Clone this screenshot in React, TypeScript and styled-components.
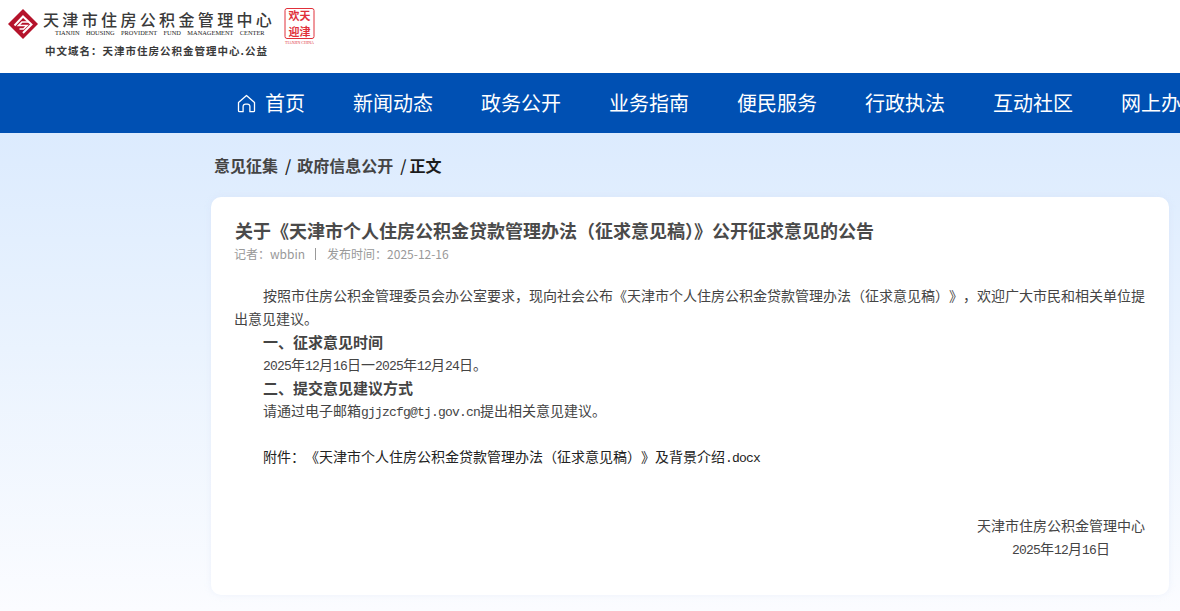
import React from "react";
import styled, { createGlobalStyle } from "styled-components";

const NAV_ITEMS = ["新闻动态", "政务公开", "业务指南", "便民服务", "行政执法", "互动社区", "网上办事"];

const GlobalStyle = createGlobalStyle`
  html, body {
    margin: 0;
    padding: 0;
    height: 100%;
    overflow: hidden;
    background: #fff;
    font-family: "Noto Sans CJK SC", "Noto Sans", sans-serif;
  }
`;

const Page = styled.div`
  width: 1180px;
  height: 611px;
  overflow: hidden;
`;

const Header = styled.header`
  height: 73px;
  background: #fff;
  display: flex;
  align-items: flex-start;
  padding: 8px 0 0 8px;
  box-sizing: border-box;
`;

const Emblem = styled.svg`
  width: 30px;
  height: 30px;
  margin-top: 1px;
  flex: none;
`;

const Brand = styled.div`
  margin-left: 5px;
  width: 233px;
`;

const BrandName = styled.div`
  font-size: 16px;
  line-height: 19px;
  margin-top: 2px;
  font-weight: 500;
  letter-spacing: 3.35px;
  color: #3a3a3a;
  white-space: nowrap;
`;

const BrandEn = styled.div`
  font-family: "Liberation Serif", serif;
  font-size: 6.4px;
  line-height: 8px;
  color: #222;
  margin-left: 12px;
  word-spacing: 4.8px;
  white-space: nowrap;
`;

const Domain = styled.div`
  font-size: 10.5px;
  line-height: 14px;
  font-weight: 700;
  letter-spacing: 1px;
  color: #3a3a3a;
  margin: 7px 0 0 2px;
  white-space: nowrap;
  text-spacing-trim: space-all;
`;

const Seal = styled.svg`
  width: 32px;
  height: 36px;
  margin-left: 8px;
  flex: none;
`;

const Nav = styled.nav`
  height: 60px;
  background: #0050b3;
  display: flex;
  align-items: center;
  gap: 48px;
  padding-left: 237px;
  overflow: hidden;
  white-space: nowrap;
`;

const NavItem = styled.a`
  color: #fff;
  font-size: 20px;
  line-height: 60px;
  flex: none;
  display: flex;
  align-items: center;
  gap: 9px;
`;

const Main = styled.main`
  height: 478px;
  background: linear-gradient(180deg, #dcebfe 0%, #eaf3fe 45%, #fbfcff 100%);
  padding: 0 11px 0 211px;
  box-sizing: border-box;
`;

const Crumbs = styled.div`
  display: flex;
  align-items: center;
  height: 64px;
  padding-left: 3px;
  font-size: 16px;
  font-weight: 700;
  color: #444;
`;

const CrumbSep = styled.span<{ $tight?: boolean }>`
  margin: 0 ${(p) => (p.$tight ? "3px" : "6px")} 0 7px;
  font-weight: 500;
  color: #222;
`;

const CrumbCurrent = styled.span`
  color: #1c1c1c;
`;

const Card = styled.article`
  height: 398px;
  background: #fff;
  border-radius: 10px;
  padding: 19px 24px 0;
  box-sizing: border-box;
  box-shadow: 0 0 6px rgba(200, 215, 240, 0.25);
`;

const Title = styled.h1`
  margin: 0;
  font-size: 18px;
  line-height: 28px;
  font-weight: 700;
  color: #4a4a4a;
`;

const Meta = styled.div`
  display: flex;
  align-items: center;
  font-size: 12px;
  line-height: 18px;
  color: #999;
  margin: 1px 0 21px -1px;
`;

const MetaDivider = styled.span`
  width: 1px;
  height: 12px;
  background: #999;
  margin: 0 11px 0 10px;
`;

const Body = styled.div`
  font-size: 14px;
  line-height: 23px;
  color: #444;
  margin-left: -1px;
  text-spacing-trim: space-all;
  font-kerning: none;
`;

const Para = styled.p<{ $dark?: boolean }>`
  margin: 0;
  text-indent: 29px;
  color: ${(p) => (p.$dark ? "#222" : "#444")};
  min-height: 23px;
`;

const Heading = styled(Para)`
  font-size: 15px;
  font-weight: 700;
`;

const Latin = styled.span`
  font-family: "Liberation Mono", monospace;
  font-size: 13px;
  letter-spacing: -0.8px;
  line-height: 1;
`;

const Signature = styled.div`
  margin-top: 46px;
  margin-left: auto;
  width: 168px;
  text-align: center;
  color: #444;
`;

const HomeIcon = () => (
  <svg width="19" height="19" viewBox="0 0 19 19" fill="none" stroke="#fff" strokeWidth="1.3" strokeLinejoin="round">
    <path d="M1.5 8.5 9.5 1.5l8 7v8.2a1 1 0 0 1-1 1h-3.6v-5.2a2.4 2.4 0 0 0-2.4-2.4h-2a2.4 2.4 0 0 0-2.4 2.4v5.2H2.5a1 1 0 0 1-1-1z" />
  </svg>
);

export default function App() {
  return (
    <Page>
      <GlobalStyle />
      <Header>
        <Emblem viewBox="0 0 30 30">
          <path d="M15 0 30 15 15 30 0 15z" fill="#b5132b" />
          <path d="M6.500 16.500 15 7.500 23.500 15.500 15 24" fill="none" stroke="#fff" strokeWidth="2" />
          <path d="M20.500 13 14 13 10.500 16.500 19 16.500 15.500 20 11.500 20" fill="none" stroke="#fff" strokeWidth="1.6" />
        </Emblem>
        <Brand>
          <BrandName>天津市住房公积金管理中心</BrandName>
          <BrandEn>TIANJIN HOUSING PROVIDENT FUND MANAGEMENT CENTER</BrandEn>
          <Domain>中文域名：天津市住房公积金管理中心.公益</Domain>
        </Brand>
        <Seal viewBox="0 0 32 36">
          <rect x="1" y="0.5" width="29" height="30" rx="2" fill="#fff" stroke="#e0303a" strokeWidth="1" />
          <text x="15.500" y="12" fontSize="11" fontWeight="700" fill="#e0303a" textAnchor="middle" fontFamily="Noto Sans CJK SC">欢天</text>
          <text x="15.500" y="28" fontSize="11" fontWeight="700" fill="#e0303a" textAnchor="middle" fontFamily="Noto Sans CJK SC">迎津</text>
          <text x="15.500" y="35.500" fontSize="4" fill="#e0303a" textAnchor="middle" fontFamily="Liberation Serif">TIANJIN CHINA</text>
        </Seal>
      </Header>
      <Nav>
        <NavItem>
          <HomeIcon />
          首页
        </NavItem>
        {NAV_ITEMS.map((item) => (
          <NavItem key={item}>{item}</NavItem>
        ))}
      </Nav>
      <Main>
        <Crumbs>
          意见征集
          <CrumbSep>/</CrumbSep>
          政府信息公开
          <CrumbSep $tight>/</CrumbSep>
          <CrumbCurrent>正文</CrumbCurrent>
        </Crumbs>
        <Card>
          <Title>关于《天津市个人住房公积金贷款管理办法（征求意见稿）》公开征求意见的公告</Title>
          <Meta>
            记者：wbbin
            <MetaDivider />
            发布时间：2025-12-16
          </Meta>
          <Body>
            <Para>按照市住房公积金管理委员会办公室要求，现向社会公布《天津市个人住房公积金贷款管理办法（征求意见稿）》，欢迎广大市民和相关单位提出意见建议。</Para>
            <Heading>一、征求意见时间</Heading>
            <Para>
              <Latin>2025</Latin>年<Latin>12</Latin>月<Latin>16</Latin>日一<Latin>2025</Latin>年<Latin>12</Latin>月<Latin>24</Latin>日。
            </Para>
            <Heading>二、提交意见建议方式</Heading>
            <Para>
              请通过电子邮箱<Latin>gjjzcfg@tj.gov.cn</Latin>提出相关意见建议。
            </Para>
            <Para />
            <Para $dark>
              附件：《天津市个人住房公积金贷款管理办法（征求意见稿）》及背景介绍<Latin>.docx</Latin>
            </Para>
            <Signature>
              天津市住房公积金管理中心
              <br />
              <Latin>2025</Latin>年<Latin>12</Latin>月<Latin>16</Latin>日
            </Signature>
          </Body>
        </Card>
      </Main>
    </Page>
  );
}
